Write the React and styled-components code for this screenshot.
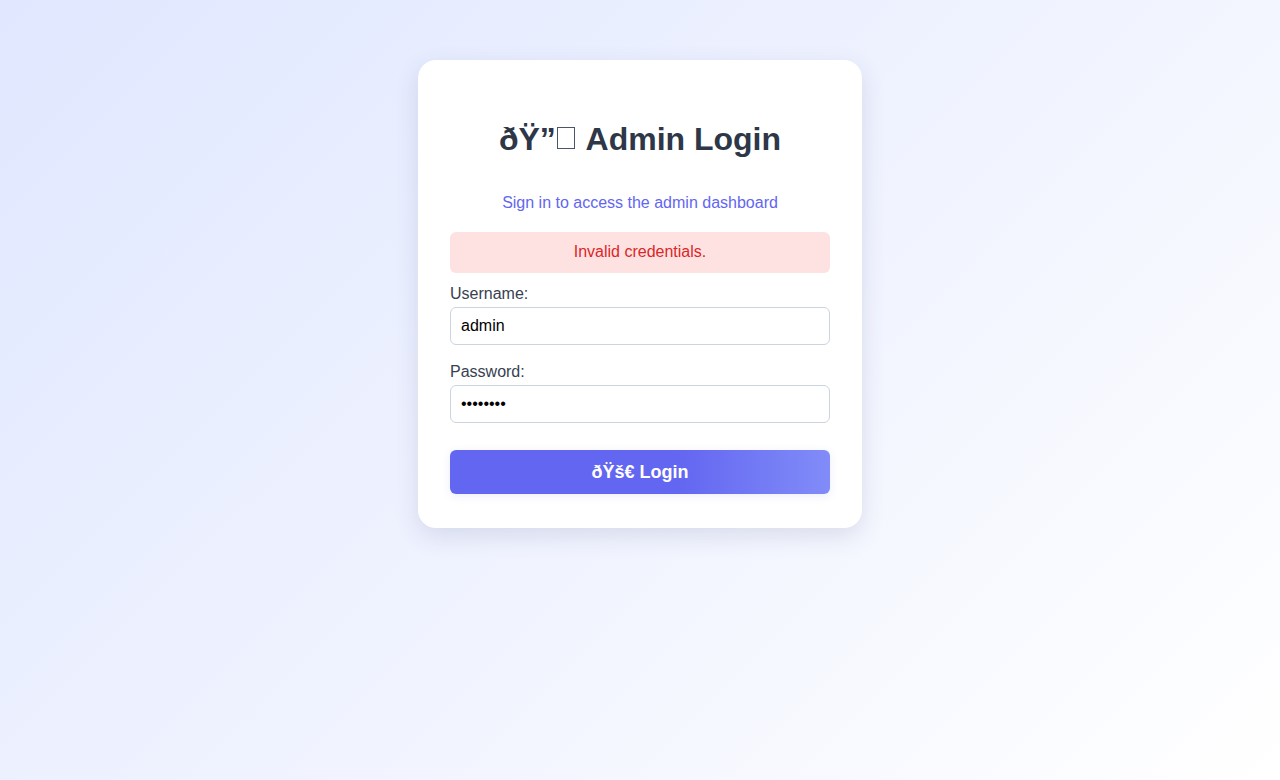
import React, { useState } from "react";
import styled, { createGlobalStyle } from "styled-components";

const GlobalStyle = createGlobalStyle`
  html, body {
    margin: 0;
    padding: 0;
  }
  body {
    font-family: "Liberation Sans", Arial, sans-serif;
    background: linear-gradient(135deg, #e0e7ff 0%, #ffffff 100%);
    min-height: 100vh;
  }
`;

const Page = styled.div`
  min-height: 100vh;
  display: flex;
  justify-content: center;
  align-items: flex-start;
  padding-top: 60px;
  box-sizing: border-box;
`;

const Card = styled.div`
  width: 444px;
  box-sizing: border-box;
  background: #ffffff;
  border-radius: 18px;
  padding: 61px 32px 34px;
  box-shadow: 0 8px 24px rgba(60, 64, 110, 0.14);
`;

const Title = styled.h1`
  margin: 0;
  text-align: center;
  font-size: 32px;
  font-weight: 700;
  color: #2d3748;
`;

/* missing-glyph box left over from the broken emoji encoding */
const Tofu = styled.span`
  display: inline-block;
  width: 16px;
  height: 20px;
  margin: 0 3px 1px 1px;
  border: 1px solid #4a5568;
  vertical-align: baseline;
`;

const Subtitle = styled.p`
  margin: 36px 0 20px;
  text-align: center;
  font-size: 16px;
  color: #6366f1;
`;

const ErrorBox = styled.div`
  background: #fee2e2;
  color: #dc2626;
  border-radius: 6px;
  padding: 11px 12px 12px;
  line-height: 18px;
  text-align: center;
  font-size: 16px;
  margin-bottom: 12px;
`;

const Field = styled.div`
  margin-bottom: ${(p) => p.$gap || 18}px;
`;

const Label = styled.label`
  display: block;
  font-size: 16px;
  color: #374151;
  margin-bottom: 4px;
`;

const Input = styled.input`
  display: block;
  width: 100%;
  height: 38px;
  box-sizing: border-box;
  padding: 0 10px;
  border: 1px solid #cbd5e0;
  border-radius: 6px;
  font-family: "Liberation Sans", Arial, sans-serif;
  font-size: 16px;
  color: #000;
  background: #fff;
  outline: none;
`;

const Button = styled.button`
  display: block;
  width: 100%;
  height: 44px;
  border: none;
  border-radius: 6px;
  background: linear-gradient(90deg, #6366f1 60%, #818cf8 100%);
  color: #ffffff;
  font-family: "Liberation Sans", Arial, sans-serif;
  font-size: 18px;
  font-weight: 700;
  cursor: pointer;
  box-shadow: 0 2px 8px rgba(99, 102, 241, 0.12);
`;

export default function App() {
  const [username, setUsername] = useState("admin");
  const [password, setPassword] = useState("password");

  return (
    <>
      <GlobalStyle />
      <Page>
        <Card>
          <Title>
            {"ðŸ”"}
            <Tofu />
            {" Admin Login"}
          </Title>
          <Subtitle>Sign in to access the admin dashboard</Subtitle>
          <ErrorBox>Invalid credentials.</ErrorBox>
          <form onSubmit={(e) => e.preventDefault()}>
            <Field>
              <Label htmlFor="username">Username:</Label>
              <Input
                id="username"
                value={username}
                onChange={(e) => setUsername(e.target.value)}
              />
            </Field>
            <Field $gap={27}>
              <Label htmlFor="password">Password:</Label>
              <Input
                id="password"
                type="password"
                value={password}
                onChange={(e) => setPassword(e.target.value)}
              />
            </Field>
            <Button type="submit">{"ðŸš€ Login"}</Button>
          </form>
        </Card>
      </Page>
    </>
  );
}
